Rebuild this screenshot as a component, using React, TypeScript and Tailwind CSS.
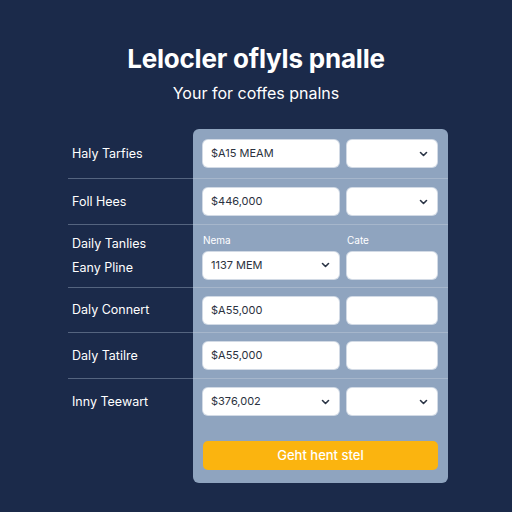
import React from "react";

type Field = { value?: string; select?: boolean };
type Row = { labels: string[]; left: Field; right: Field; heads?: [string, string]; h: string; line: boolean };

const rows: Row[] = [
  { labels: ["Haly Tarfies"], left: { value: "$A15 MEAM" }, right: { select: true }, h: "h-[50px]", line: true },
  { labels: ["Foll Hees"], left: { value: "$446,000" }, right: { select: true }, h: "h-[46px]", line: true },
  { labels: ["Daily Tanlies", "Eany Pline"], left: { value: "1137 MEM", select: true }, right: {}, heads: ["Nema", "Cate"], h: "h-[63px]", line: true },
  { labels: ["Daly Connert"], left: { value: "$A55,000" }, right: {}, h: "h-[45px]", line: true },
  { labels: ["Daly Tatilre"], left: { value: "$A55,000" }, right: {}, h: "h-[46px]", line: true },
  { labels: ["Inny Teewart"], left: { value: "$376,002", select: true }, right: { select: true }, h: "h-[45px]", line: false },
];

function Chevron() {
  return (
    <svg width="9" height="6" viewBox="0 0 9 6" className="shrink-0">
      <path d="M1.5 1.5 L4.5 4.5 L7.5 1.5" fill="none" stroke="#2a3445" strokeWidth="1.6" strokeLinecap="round" strokeLinejoin="round" />
    </svg>
  );
}

function Input({ f, w }: { f: Field; w: string }) {
  return (
    <div className={`${w} h-[27px] bg-white rounded-[5px] flex items-center justify-between pl-[8px] pr-[9px] text-[11px] text-[#2b3240] shadow-[0_0_0_1px_rgba(255,255,255,0.6)]`}>
      <span>{f.value ?? ""}</span>
      {f.select && <Chevron />}
    </div>
  );
}

export default function App() {
  return (
    <div
      className="w-[512px] h-[512px] bg-[#1b2a4a] flex flex-col items-center overflow-hidden"
      style={{ fontFamily: "Inter, 'Liberation Sans', sans-serif" }}
    >
      <h1 className="mt-[43px] text-[26px] leading-[32px] font-bold text-white tracking-[-0.2px]">Lelocler oflyls pnalle</h1>
      <p className="mt-[8px] text-[16px] leading-[20px] text-white">Your for coffes pnalns</p>

      <div className="mt-[26px] w-[380px] self-start ml-[68px] flex flex-col">
        {rows.map((r, i) => (
          <div key={i} className="flex">
            <div className={`w-[125px] ${r.h} pl-[4px] flex flex-col justify-center gap-[10px] text-[12.5px] text-white ${r.line ? "border-b border-[#55647f]" : ""}`}>
              {r.labels.map((l) => (
                <span key={l} className="leading-[14px]">{l}</span>
              ))}
            </div>
            <div
              className={`w-[255px] ${r.h} bg-[#8fa4bf] px-[10px] flex flex-col justify-center ${i === 0 ? "rounded-t-[6px]" : ""} ${r.line ? "border-b border-[#a6b6cb]" : ""}`}
            >
              {r.heads && (
                <div className="flex gap-[8px] mb-[6px] text-[10px] leading-[12px] text-white">
                  <span className="w-[136px]">{r.heads[0]}</span>
                  <span>{r.heads[1]}</span>
                </div>
              )}
              <div className="flex gap-[8px]">
                <Input f={r.left} w="w-[136px]" />
                <Input f={r.right} w="w-[90px]" />
              </div>
            </div>
          </div>
        ))}
        <div className="flex">
          <div className="w-[125px]" />
          <div className="w-[255px] bg-[#8fa4bf] rounded-b-[6px] px-[10px] pt-[17px] pb-[13px]">
            <button className="w-full h-[29px] rounded-[5px] bg-[#fbb40f] text-white text-[13px] font-medium">
              Geht hent stel
            </button>
          </div>
        </div>
      </div>
    </div>
  );
}
